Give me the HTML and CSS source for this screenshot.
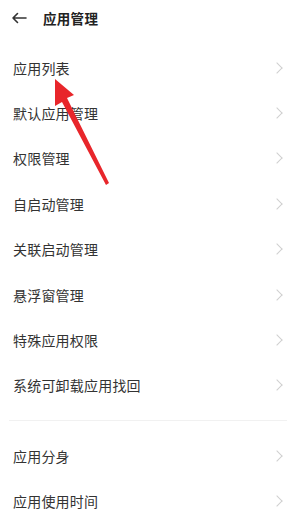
FILE: index.html
```html
<!DOCTYPE html>
<html>
<head>
    <meta charset="utf-8">
    <title>应用管理</title>
    <link rel="stylesheet" href="styles.css">
</head>
<body>
    <div class="page">
        <div class="header">
            <svg class="back" width="16" height="12" viewBox="0 0 16 12">
                <path d="M15 6H2M6.5 1.5L2 6l4.5 4.5" fill="none" stroke="#333" stroke-width="1.6" stroke-linecap="round" stroke-linejoin="round"/>
            </svg>
            <h1>应用管理</h1>
        </div>

        <ul class="list">
            <li>应用列表</li>
            <li>默认应用管理</li>
            <li>权限管理</li>
            <li>自启动管理</li>
            <li>关联启动管理</li>
            <li>悬浮窗管理</li>
            <li>特殊应用权限</li>
            <li>系统可卸载应用找回</li>
        </ul>
        <div class="divider"></div>
        <ul class="list">
            <li>应用分身</li>
            <li>应用使用时间</li>
        </ul>

        <svg class="pointer" width="293" height="200" viewBox="0 0 293 200">
            <path d="M55 79 L74 95 L67 98 L109 183 L106 185 L62 102 L55 106 Z" fill="#e8262b"/>
        </svg>
    </div>
</body>
</html>
```

FILE: styles.css
```css
body {
    margin: 0;
    background: #fff;
    font-family: "Noto Sans CJK SC", "Noto Sans", sans-serif;
    color: #333;
}

.page {
    position: relative;
    width: 293px;
    height: 525px;
    overflow: hidden;
}

.header {
    height: 35px;
    display: flex;
    align-items: center;
    padding-left: 11px;
    margin-bottom: 10px;
}

.back {
    display: block;
}

h1 {
    margin: 0 0 0 16px;
    font-size: 13.5px;
    font-weight: 700;
    color: #222;
    letter-spacing: 0.3px;
}

.list {
    list-style: none;
    margin: 0;
    padding: 0;
}

.list li {
    height: 45.4px;
    display: flex;
    align-items: center;
    justify-content: space-between;
    padding: 0 8px 0 13px;
    font-size: 14px;
    letter-spacing: 0.2px;
}

.list li::after {
    content: "";
    width: 7px;
    height: 7px;
    border-top: 1.3px solid #cfcfcf;
    border-right: 1.3px solid #cfcfcf;
    transform: rotate(45deg);
    margin-right: 4px;
}

.divider {
    height: 1px;
    background: #f1f1f1;
    margin: 12px 6px 12px 9px;
}

.pointer {
    position: absolute;
    left: 0;
    top: 0;
}
```
